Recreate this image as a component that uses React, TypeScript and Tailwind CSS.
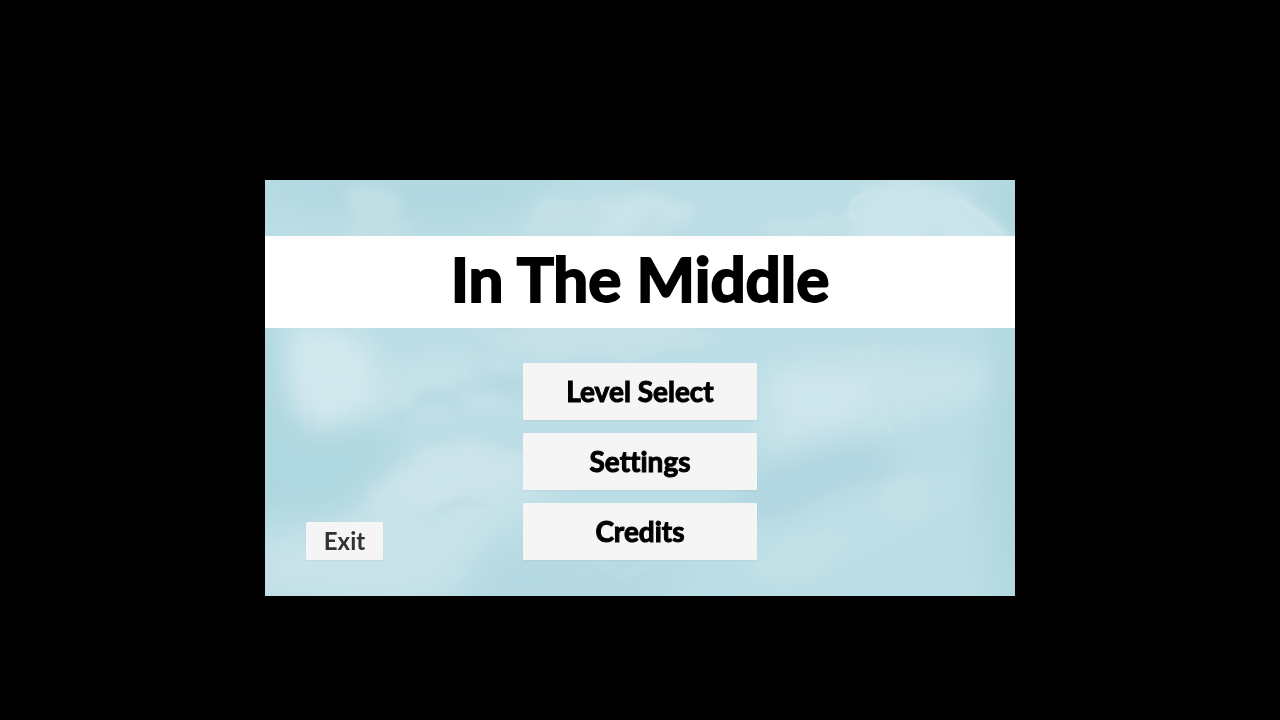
import React from 'react'

const menuItems = ['Level Select', 'Settings', 'Credits']

const PaintedSky = () => (
  <svg
    className="absolute inset-0 h-full w-full"
    viewBox="0 0 750 416"
    preserveAspectRatio="xMidYMid slice"
    aria-hidden="true"
  >
    <defs>
      <filter id="wash" x="-30%" y="-30%" width="160%" height="160%">
        <feGaussianBlur stdDeviation="14" />
      </filter>
      <filter id="brush" x="-30%" y="-30%" width="160%" height="160%">
        <feTurbulence type="fractalNoise" baseFrequency="0.02 0.05" numOctaves="3" seed="4" result="grain" />
        <feDisplacementMap in="SourceGraphic" in2="grain" scale="36" />
        <feGaussianBlur stdDeviation="6" />
      </filter>
      <filter id="bristle" x="-30%" y="-30%" width="160%" height="160%">
        <feGaussianBlur stdDeviation="2" />
      </filter>
    </defs>
    <rect width="750" height="416" fill="#bbdde5" />

    <g filter="url(#wash)">
      <path d="M10 -10H310L250 30L180 45L0 20Z" fill="#b0d7e0" />
      <path d="M-20 140L25 150L30 240L140 255L90 330L-20 340Z" fill="#afd7df" />
      <path d="M20 150Q90 130 110 180T80 240Q40 270 20 200Z" fill="#d2e8ee" />
      <path d="M110 190Q180 160 270 190T190 230Q140 250 110 220Z" fill="#c6e2e9" />
      <path d="M80 340Q160 250 225 270T290 320Q220 340 200 390T-10 410V370Z" fill="#c8e3ea" />
      <path d="M230 370L420 380L390 430H180Z" fill="#b5d9e2" />
      <path d="M490 190Q570 160 700 180T600 250Q540 300 490 260Z" fill="#c8e3ea" />
      <path d="M480 300Q580 240 620 270T560 350Q500 350 470 330Z" fill="#b0d6e0" />
      <path d="M480 360Q610 290 690 290T570 390Q510 420 470 390Z" fill="#c0e0e7" />
      <path d="M715 -10H780V430H735L715 300L730 160Z" fill="#b0d7df" />
    </g>

    <g filter="url(#brush)">
      <g opacity="0.8">
        <path d="M85 10Q120 0 145 25L125 60H75Z" fill="#c3e0e7" />
        <path d="M260 35Q340 0 430 22L390 65H260Z" fill="#c6e2e8" />
        <path d="M330 45Q350 18 430 20L400 38L350 58Z" fill="#d0e7ed" />
        <path d="M585 30Q625 -15 680 8T750 68H585Z" fill="#cee6ed" />
        <path d="M480 55Q530 30 570 40L600 60Z" fill="#c9e3ea" />
        <path d="M200 150Q300 135 390 142L470 155Q340 190 240 165Z" fill="#cae3e9" />
        <path d="M120 232Q220 185 270 200L250 222Q180 205 125 248Z" fill="#b3d8e0" />
        <path d="M110 315Q170 255 215 268Q260 273 275 290Q220 310 110 330Z" fill="#cde5ec" />
        <path d="M160 345Q185 310 230 312Q180 322 168 350Z" fill="#b5dae2" />
        <path d="M515 205Q570 180 610 205L585 245L520 255Z" fill="#cfe6ed" />
        <path d="M610 325Q650 285 670 305L640 335Z" fill="#c5e2e9" />
        <path d="M515 370Q560 345 590 360L545 395H490Z" fill="#c4e1e8" />
      </g>
    </g>

    <g filter="url(#bristle)" fill="none" strokeLinecap="round">
      <path d="M588 40Q580 20 600 15M690 18Q720 35 738 55" stroke="#d7ebf1" strokeWidth="3" opacity="0.7" />
      <path d="M150 280Q190 255 260 278" stroke="#d4e9ef" strokeWidth="3" opacity="0.5" />
      <path d="M175 330Q200 312 223 328" stroke="#aed3dc" strokeWidth="2" opacity="0.5" />
      <path d="M30 165L42 245M48 160L55 250M64 165L66 245M80 160L82 235" stroke="#d9edf2" strokeWidth="4" opacity="0.25" />
      <path d="M330 382L360 400L390 382M340 382L360 392L380 382" stroke="#c8e3e9" strokeWidth="2" opacity="0.6" />
      <path d="M590 170L610 250M610 165L625 255M630 180L640 240" stroke="#d5eaf0" strokeWidth="4" opacity="0.25" />
    </g>
  </svg>
)

const App = () => {
  return (
    <div className="flex min-h-screen items-center justify-center bg-black pt-14 font-['Lato',sans-serif] font-bold [font-variant-ligatures:none]">
      <main className="relative w-full max-w-[750px] overflow-hidden pt-14 pb-9">
        <PaintedSky />

        <header className="relative flex h-[92px] items-center justify-center bg-white pb-2">
          <h1 className="text-[62px] text-black [-webkit-text-stroke:2px_black]">In The Middle</h1>
        </header>

        <div className="relative mt-[35px] grid grid-cols-[1fr_234px_1fr] items-end px-[41px]">
          <div>
            <button
              type="button"
              className="h-[38px] w-[77px] rounded-[1px] bg-[#f5f5f5] pb-px text-2xl text-[#323232] shadow-xs"
            >
              Exit
            </button>
          </div>
          <nav className="flex flex-col gap-[13px]">
            {menuItems.map((item) => (
              <button
                key={item}
                type="button"
                className="h-[57px] rounded-[1px] bg-[#f5f5f5] pb-px text-[28px] text-black shadow-xs [-webkit-text-stroke:1px_black]"
              >
                {item}
              </button>
            ))}
          </nav>
        </div>
      </main>
    </div>
  )
}

export default App
